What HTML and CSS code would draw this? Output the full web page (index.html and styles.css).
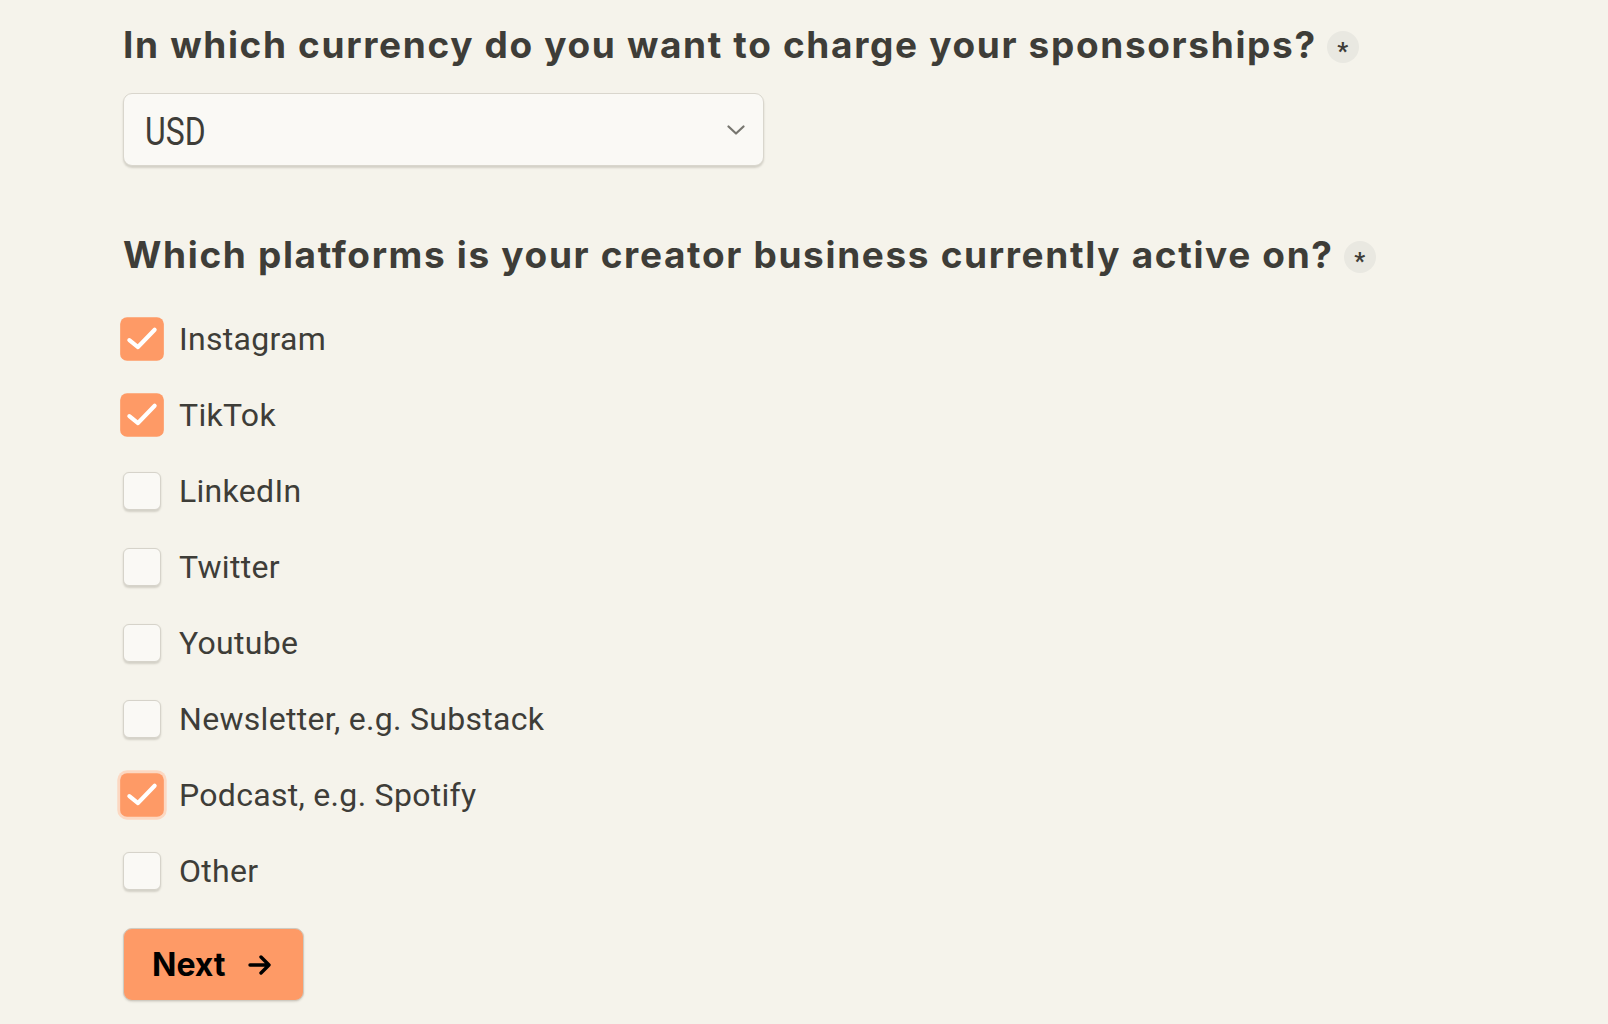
FILE: index.html
```html
<!DOCTYPE html>
<html lang="en">
<head>
<meta charset="utf-8">
<title>Sponsorship setup</title>
<link rel="stylesheet" href="styles.css">
</head>
<body>
<main class="form">
  <section class="question question-currency">
    <h2 class="q-title">In which currency do you want to charge your sponsorships? <span class="req">*</span></h2>
    <div class="select">
      <span class="select-value">USD</span>
      <svg class="chevron" width="18" height="10" viewBox="0 0 18 10"><polyline points="1.5,1.5 9,8.5 16.5,1.5" fill="none" stroke="#77766f" stroke-width="2.2" stroke-linecap="round" stroke-linejoin="round"/></svg>
    </div>
  </section>

  <section class="question question-platforms">
    <h2 class="q-title">Which platforms is your creator business currently active on? <span class="req">*</span></h2>
    <ul class="options">
      <li class="option"><span class="box checked"><svg viewBox="0 0 38 38"><polyline points="8,20 15.5,26 30,11" fill="none" stroke="#fff" stroke-width="3.6" stroke-linecap="round" stroke-linejoin="round"/></svg></span><span class="label">Instagram</span></li>
      <li class="option"><span class="box checked"><svg viewBox="0 0 38 38"><polyline points="8,20 15.5,26 30,11" fill="none" stroke="#fff" stroke-width="3.6" stroke-linecap="round" stroke-linejoin="round"/></svg></span><span class="label">TikTok</span></li>
      <li class="option"><span class="box"></span><span class="label">LinkedIn</span></li>
      <li class="option"><span class="box"></span><span class="label">Twitter</span></li>
      <li class="option"><span class="box"></span><span class="label">Youtube</span></li>
      <li class="option"><span class="box"></span><span class="label">Newsletter, e.g. Substack</span></li>
      <li class="option"><span class="box checked focused"><svg viewBox="0 0 38 38"><polyline points="8,20 15.5,26 30,11" fill="none" stroke="#fff" stroke-width="3.6" stroke-linecap="round" stroke-linejoin="round"/></svg></span><span class="label">Podcast, e.g. Spotify</span></li>
      <li class="option"><span class="box"></span><span class="label">Other</span></li>
    </ul>
  </section>

  <button class="next" type="button">Next <svg class="arrow" width="24" height="22" viewBox="0 0 24 22"><path d="M2 11 H21 M13 3 L21 11 L13 19" fill="none" stroke="#000" stroke-width="3.4" stroke-linecap="round" stroke-linejoin="round"/></svg></button>
</main>
</body>
</html>
```

FILE: styles.css
```css
html, body {
  margin: 0;
  padding: 0;
}

body {
  background: #f5f3eb;
  color: #3e3d38;
  font-family: "Roboto", "Liberation Sans", sans-serif;
  width: 1608px;
  height: 1024px;
  overflow: hidden;
}

.form {
  padding: 21px 0 0 123px;
  display: flex;
  flex-direction: column;
  align-items: flex-start;
}

.question {
  display: flex;
  flex-direction: column;
  align-items: flex-start;
}

.q-title {
  margin: 0;
  font-family: "Inter", "Roboto", sans-serif;
  font-size: 37px;
  line-height: 48px;
  font-weight: 700;
  letter-spacing: 1.65px;
  color: #3e3d38;
  display: flex;
  align-items: center;
  gap: 10px;
}

.req {
  width: 32px;
  height: 32px;
  border-radius: 50%;
  background: #e9e8e1;
  display: inline-flex;
  align-items: center;
  justify-content: center;
  font-family: "Roboto", sans-serif;
  font-size: 24px;
  line-height: 1;
  font-weight: 700;
  letter-spacing: 0;
  padding-top: 7px;
  box-sizing: border-box;
  margin-top: 4px;
}

.select {
  margin-top: 24px;
  width: 641px;
  height: 73px;
  box-sizing: border-box;
  background: #faf9f5;
  border: 1.5px solid #d9d6cd;
  border-radius: 9px;
  box-shadow: 0 2px 2px rgba(60, 55, 40, 0.18);
  display: flex;
  align-items: center;
  justify-content: space-between;
  padding: 4px 18px 0 21px;
}

.select-value {
  font-size: 38px;
  color: #3e3d38;
  display: inline-block;
  transform: scaleX(0.84);
  transform-origin: left center;
}

.chevron {
  display: block;
  margin-top: -4px;
}

.question-platforms {
  margin-top: 65px;
}

.options {
  list-style: none;
  margin: 38px 0 0;
  padding: 0;
  display: flex;
  flex-direction: column;
  gap: 32px;
}

.option {
  height: 44px;
  display: flex;
  align-items: center;
  gap: 18px;
}

.box {
  width: 38px;
  height: 38px;
  box-sizing: border-box;
  border-radius: 6px;
  background: #faf9f5;
  border: 1.5px solid #d6d3ca;
  box-shadow: 0 1.5px 2px rgba(60, 55, 40, 0.18);
  flex: none;
}

.box svg {
  display: block;
  width: 38px;
  height: 38px;
}

.box.checked {
  background: #fe9a66;
  border: none;
  box-shadow: none;
  transform: scale(1.15);
}

.box.focused {
  box-shadow: 0 0 0 2.5px #fcd8c2;
}

.label {
  font-size: 32px;
  letter-spacing: 0.3px;
  color: #3e3d38;
  line-height: 44px;
}

.next {
  margin-top: 35px;
  height: 73px;
  padding: 0 31px 0 28px;
  background: #fe9a66;
  border: 1.5px solid #cfcbc1;
  border-radius: 9px;
  box-shadow: 0 1px 2px rgba(60, 55, 40, 0.15);
  font-family: "Inter", "Roboto", sans-serif;
  font-size: 32px;
  font-weight: 700;
  color: #000;
  display: flex;
  align-items: center;
  gap: 22px;
  cursor: pointer;
}

.arrow {
  display: block;
}
```
